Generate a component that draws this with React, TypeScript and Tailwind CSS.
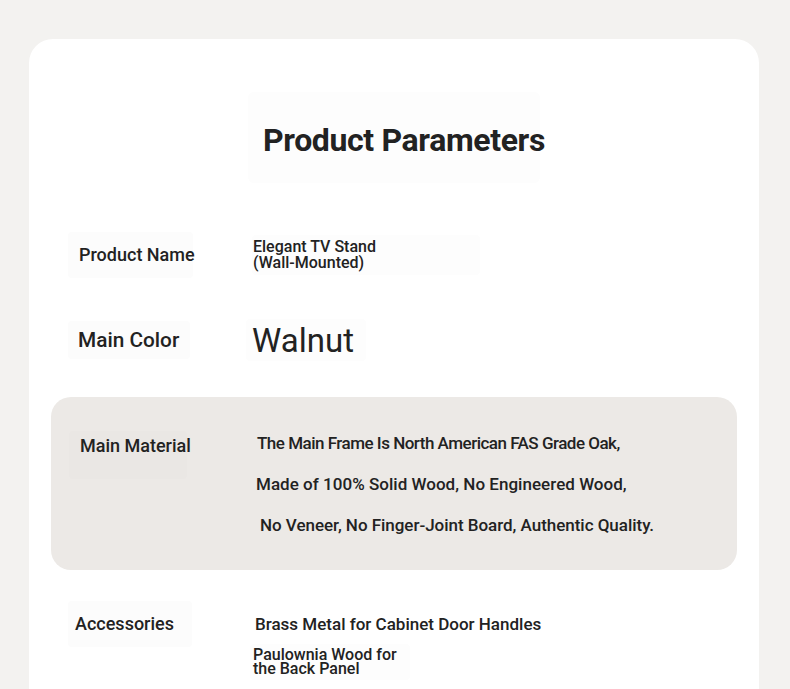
import React from "react";

export default function App() {
  return (
    <div className="min-h-[689px] w-[790px] overflow-hidden bg-[#f3f2f0] pt-[39px] pl-[29px] text-[#222222]" style={{ fontFamily: "Roboto, 'Noto Sans', sans-serif" }}>
      <div className="flex h-[700px] w-[730px] flex-col rounded-[24px] bg-white">
        {/* Title */}
        <div className="mt-[53px] flex justify-center">
          <div className="flex h-[91px] w-[292px] items-center rounded-[6px] bg-[#fdfdfd] pl-[15px] pt-[5px]">
            <h1 className="whitespace-nowrap text-[32px] font-bold leading-none tracking-[-0.36px]">Product Parameters</h1>
          </div>
        </div>

        {/* Product Name */}
        <div className="mt-[27px] flex h-[90px] items-center">
          <div className="ml-[39px] flex h-[46px] w-[125px] items-center rounded-[4px] bg-[#fcfcfc] pl-[11px]">
            <span className="whitespace-nowrap text-[18px] font-medium leading-none">Product Name</span>
          </div>
          <div className="ml-[59px] flex h-[40px] w-[228px] items-center rounded-[4px] bg-[#fdfdfd] pl-[1px]">
            <div className="whitespace-nowrap text-[16px] font-medium leading-[16px]">
              <div>Elegant TV Stand</div>
              <div>(Wall-Mounted)</div>
            </div>
          </div>
        </div>

        {/* Main Color */}
        <div className="flex h-[80px] items-center">
          <div className="ml-[39px] flex h-[38px] w-[122px] items-center rounded-[4px] bg-[#fcfcfc] pl-[10px]">
            <span className="whitespace-nowrap text-[20.8px] font-medium leading-none">Main Color</span>
          </div>
          <div className="ml-[56px] flex h-[42px] w-[120px] items-center rounded-[4px] bg-[#fdfdfd] pl-[6px]">
            <span className="text-[33px] leading-none">Walnut</span>
          </div>
        </div>

        {/* Main Material panel */}
        <div className="mx-[22px] mt-[17px] flex h-[173px] rounded-[20px] bg-[#ece9e6] pt-[34px]">
          <div className="ml-[18px] flex h-[48px] w-[118px] items-start rounded-[4px] bg-[#eae7e4] pl-[11px] pt-[3px]">
            <span className="whitespace-nowrap text-[18px] font-medium leading-[24px]">Main Material</span>
          </div>
          <div className="ml-[69px] flex flex-col gap-[17px] whitespace-nowrap text-[17px] font-medium leading-[24px]">
            <div className="pl-[1px] tracking-[-0.5px]">The Main Frame Is North American FAS Grade Oak,</div>
            <div className="tracking-[0.03px]">Made of 100% Solid Wood, No Engineered Wood,</div>
            <div className="pl-[4px] tracking-[-0.03px]">No Veneer, No Finger-Joint Board, Authentic Quality.</div>
          </div>
        </div>

        {/* Accessories */}
        <div className="mt-[31px] flex">
          <div className="ml-[39px] flex h-[46px] w-[124px] items-center rounded-[4px] bg-[#fcfcfc] pl-[7px]">
            <span className="whitespace-nowrap text-[18px] font-medium leading-none">Accessories</span>
          </div>
          <div className="ml-[58px] flex flex-col">
            <div className="flex h-[46px] items-center pl-[5px]">
              <span className="whitespace-nowrap text-[17px] font-medium leading-none">Brass Metal for Cabinet Door Handles</span>
            </div>
            <div className="mt-[-3px] flex h-[36px] w-[160px] items-center rounded-[4px] bg-[#fdfdfd] pl-[3px]">
              <div className="whitespace-nowrap text-[16px] font-medium leading-[14px]">
                <div>Paulownia Wood for</div>
                <div>the Back Panel</div>
              </div>
            </div>
          </div>
        </div>
      </div>
    </div>
  );
}
